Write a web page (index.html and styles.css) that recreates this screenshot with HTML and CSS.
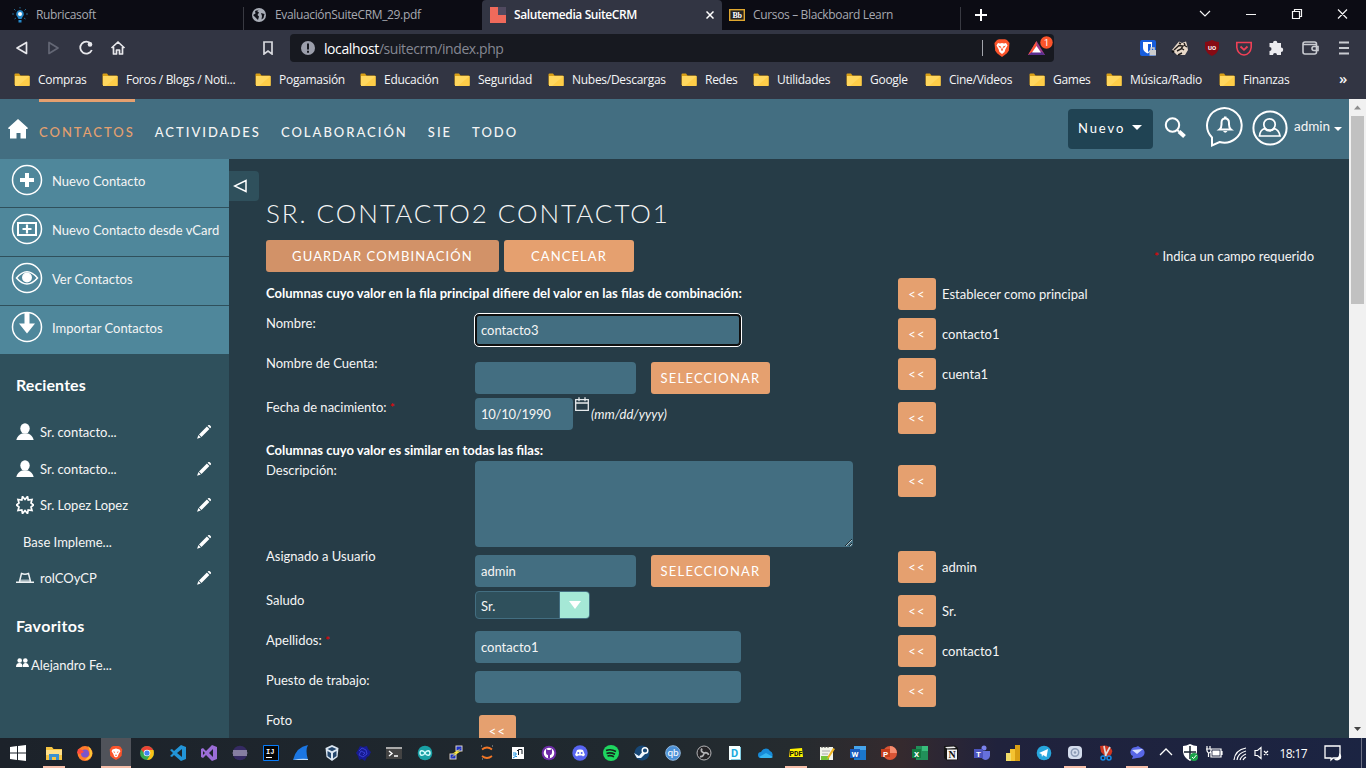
FILE: index.html
```html
<!DOCTYPE html>
<html lang="es">
<head>
<meta charset="utf-8">
<title>Salutemedia SuiteCRM</title>
<link rel="stylesheet" href="styles.css">
</head>
<body>
<svg class="defs" aria-hidden="true">
  <symbol id="folder" viewBox="0 0 16 14"><path d="M.5 1.5Q.5.5 1.5.5H5l1.500 2h8Q15.500 2.500 15.500 3.500V12H.5z" fill="#d9a016"/><rect x="1" y="3" width="14.500" height="10" fill="#ffd75e"/><path d="M15.500 3V13H4z" fill="#fdc93f" opacity=".7"/></symbol>
  <symbol id="pencil" viewBox="0 0 14 14"><path d="M10.600.8 13.100 3.300 14 2.400Q14.300 1.700 13.600 1L12.800.3Q12.200-.2 11.500 0zM9.900 1.500 12.400 4 4.500 11.900 2 9.400zM1.400 10 3.800 12.500.1 13.800z" fill="#fff"/></symbol>
  <symbol id="person" viewBox="0 0 18 18"><ellipse cx="9" cy="5.500" rx="4.700" ry="5.200" fill="#fff"/><path d="M.3 17Q1.500 12 6 10.500H12Q16.500 12 17.700 17z" fill="#fff"/></symbol>
</svg>

<header class="tabs">
  <div class="tab first"><svg class="i16" viewBox="0 0 16 16"><path d="M8 3a4 4 0 0 0-2.500 7L6.500 12h3l1-2A4 4 0 0 0 8 3M6.500 13h3v2.500h-3z" fill="#2588c9"/><circle cx="8" cy="7" r="2" fill="#fff"/><path d="M8 0v1.500M2 2l1.500 1.500M14 2l-1.500 1.500M0 7h2M14 7h2M2.500 12 4 11M13.500 12 12 11" stroke="#24678e"/></svg><span>Rubricasoft</span></div>
  <div class="tab second"><svg class="i16" viewBox="0 0 16 16"><circle cx="8" cy="8" r="7" fill="#aaaeb8"/><path d="M8.500 2.500 6 4l2 1.500L6.500 8 8 9.500 7 13 4.500 10.500 2 8 4.500 6.500 4 4zM10 6l3.500 1-1 4-2 1.500L11 9z" fill="#12131b"/></svg><span>EvaluaciónSuiteCRM_29.pdf</span></div>
  <div class="tab active"><svg class="i16" viewBox="0 0 16 16"><path d="M0 0h8v8h8v8H0z" fill="#f06a5b"/><path d="M8 0h8v8H8z" fill="#514a60"/></svg><span>Salutemedia SuiteCRM</span><svg class="x" viewBox="0 0 8 8"><path d="m.5.5 7 7m0-7-7 7" stroke="#fff" stroke-width="1.500"/></svg></div>
  <div class="tab fourth"><svg class="i16" viewBox="0 0 16 16"><rect x=".7" y="2.700" width="14.600" height="10.600" fill="#222" stroke="#dfa72f" stroke-width="1.400"/><text x="8" y="11" class="bb">Bb</text></svg><span>Cursos – Blackboard Learn</span></div>
  <svg class="plus" viewBox="0 0 12 12"><path d="M6 0v12M0 6h12" stroke="#fff" stroke-width="2"/></svg>
  <svg class="wincontrols" viewBox="0 0 168 16"><g fill="none" stroke="#f5f5f5" stroke-width="1.200"><path d="m1 5 5 5 5-5M47 8.500h10M93.500 5.500h7v7h-7zM95.500 5V3.500h7v7H101M139 3.500l9 9m0-9-9 9"/></g></svg>
</header>

<section class="toolbar">
  <svg class="navicons" viewBox="0 0 120 20"><g fill="none" stroke-width="1.700" stroke-linejoin="round"><path d="M12.500 4.500v11L3 10z" stroke="#e8e8ec"/><path d="M35 4.500v11L44 10z" stroke="#646775"/><path d="M77 6A6 6 0 1 0 77.800 12" stroke="#e8e8ec" stroke-width="1.800"/><circle cx="76" cy="6.400" r="2.300" fill="#e8e8ec"/><path d="m97.500 10 6.500-6 6.500 6M99.500 9v7h3v-4h3v4h3V9" stroke="#e8e8ec"/></g></svg>
  <svg class="mark" viewBox="0 0 10 14"><path d="M1 1h8v12L5 10l-4 3z" fill="none" stroke="#d8d9de" stroke-width="1.700"/></svg>
  <div class="address">
    <svg class="info" viewBox="0 0 14 14"><circle cx="7" cy="7" r="7" fill="#9b9eab"/><path d="M6 2.500h2v6H6zM6 9.700h2v2H6z" fill="#171920"/></svg>
    <span class="url"><b>localhost</b>/suitecrm/index.php</span>
    <i class="bar"></i>
    <svg class="brave" viewBox="0 0 16 18"><path d="m3 1 2-.8h6L13 1l2.500 3-.7 7.500Q14 14 8 18 2 14 1.200 11.500L.5 4z" fill="#fb542b"/><path d="m4 4 2 .5L8 4l2 .5 2-.5 1.500 2.500L11.500 10l-1 3L8 15l-2.500-2-1-3-2-3.500z" fill="#fff"/><path d="m4 6.500 3 1-.5 2zm8 0-3 1 .5 2zM8 8l1 3-1 1-1-1z" fill="#fb542b"/></svg>
    <svg class="bat" viewBox="0 0 27 21"><path d="M9.500 5 18 19H1z" fill="#9e3c8b"/><path d="M9.500 5 1 19l5-3 3.500-6z" fill="#ff5734"/><path d="M1 19h17l-3-3H5z" fill="#5a2f8f"/><path d="M9.500 10 14 16.500H5z" fill="#fff"/><circle cx="19.500" cy="6.500" r="6.200" fill="#fb542b"/><text x="19.500" y="9.800" class="badge">1</text></svg>
  </div>
  <svg class="exts" viewBox="0 0 218 20">
    <rect y="2" width="16" height="16" rx="2" fill="#175ddc"/><path d="M3 4h9v6q-1 4-4.500 5.500Q3 13 3 10z" fill="#fff"/><path d="M8 6h3v6L8 14z" fill="#175ddc"/><rect x="9.500" y="12" width="6.500" height="5.500" fill="#ccc"/><path d="M11 12v-2h3v2" fill="none" stroke="#ccc" stroke-width="1.500"/>
    <path d="m32 12 4-5 3-3.500 3 1.500 4-1.500 1 3.500 1 5-3 5h-8z" fill="#e8d8c8"/><path d="m34 12 5-4.500 4 .5-2 3-4 2m7-6 3 2m-5 6-4 2m3-7 3 2M39 5l2 1m3-1 1 2" fill="none" stroke="#221d1b" stroke-width="1.400"/><circle cx="33" cy="13.500" r="1.300" fill="#111"/>
    <path d="M72 2q4 2 7 2v6q-1 5-7 8-6-3-7-8V4q3 0 7-2" fill="#870a13"/><text x="72" y="11.500" class="ub">UO</text>
    <path d="M96.800 4.500h14.400v5q-1 7-7.200 7.500-6.200-.5-7.200-7.500z" fill="none" stroke="#ef4056" stroke-width="1.600"/><path d="m100.500 8.500 3.500 3.300 3.500-3.300" fill="none" stroke="#ef4056" stroke-width="1.800"/>
    <path d="M129.500 5h3.500a2.200 2.200 0 0 1 4.400 0h3.600v4.500a2.200 2.200 0 0 1 0 4.400V17h-4a2 2 0 0 0-4 0h-3.500v-4a2 2 0 0 0 0-4z" fill="#ececf0"/>
    <g fill="none" stroke="#c9cbd1" stroke-width="1.600"><rect x="163" y="4" width="13.500" height="12" rx="2"/><path d="M163 6.500h14M178 8.500h-4q-2 0-2 2t2 2h4z"/><path d="M199 4.500h10M199 10h10M199 15.500h10" stroke-width="1.900"/></g>
  </svg>
</section>

<nav class="bookmarks">
  <a><svg><use href="#folder"/></svg>Compras</a><a><svg><use href="#folder"/></svg>Foros / Blogs / Noti...</a><a><svg><use href="#folder"/></svg>Pogamasión</a><a><svg><use href="#folder"/></svg>Educación</a><a><svg><use href="#folder"/></svg>Seguridad</a><a><svg><use href="#folder"/></svg>Nubes/Descargas</a><a><svg><use href="#folder"/></svg>Redes</a><a><svg><use href="#folder"/></svg>Utilidades</a><a><svg><use href="#folder"/></svg>Google</a><a><svg><use href="#folder"/></svg>Cine/Videos</a><a><svg><use href="#folder"/></svg>Games</a><a><svg><use href="#folder"/></svg>Música/Radio</a><a><svg><use href="#folder"/></svg>Finanzas</a><b>»</b>
</nav>

<main class="viewport">
  <div class="site">
    <nav class="crmnav">
      <svg class="home" viewBox="0 0 20 20"><path d="M10 0 20 9l-.7 1H18v9.500h-5.500V14h-4v5.500H2V10H.7L0 9z" fill="#fff"/></svg>
      <a class="current">CONTACTOS</a><a>ACTIVIDADES</a><a>COLABORACIÓN</a><a>SIE</a><a>TODO</a>
      <div class="right">
        <button class="new">Nuevo <i class="caret"></i></button>
        <svg class="search" viewBox="0 0 22 22"><circle cx="8.500" cy="8" r="6.700" fill="none" stroke="#fff" stroke-width="2"/><path d="m13 13 2 1.500" stroke="#fff" stroke-width="2"/><path d="m15 14.500 5.500 5" stroke="#fff" stroke-width="4"/></svg>
        <svg class="bell" viewBox="0 0 38 42"><g fill="none" stroke="#fff" stroke-width="2"><path d="M6 33V39.500L13.500 36A17.300 17.300 0 1 0 6 31.500z"/><path d="M13.500 23.500H25Q23 22 23 18.500V17Q23 12.500 19.200 12.500T15.500 17V18.500Q15.500 22 13.500 23.500z"/></g><path d="M18 10.500h2.500V12H18zM17 25h4.500q-2.200 3.500-4.500 0" fill="#fff"/></svg>
        <svg class="user" viewBox="0 0 36 36"><g fill="none" stroke="#fff" stroke-width="1.700"><circle cx="18" cy="18" r="16.600" stroke-width="2"/><circle cx="17.500" cy="14.500" r="5.700"/><path d="M12.500 18.500Q8 20 7.500 26h20.500Q27 20 22.500 18.500Q17.500 23 12.500 18.500z"/></g></svg>
        <span class="admin">admin <i class="caret"></i></span>
      </div>
    </nav>
    <div class="body">
      <aside>
        <a class="action"><svg viewBox="0 0 32 32"><circle cx="16" cy="16" r="14.500"/><path d="M16 9v14M9 16h14" stroke-width="4"/></svg>Nuevo Contacto</a>
        <a class="action"><svg viewBox="0 0 32 32"><circle cx="16" cy="16" r="14.500"/><path d="M7 10h18v12H7z" stroke-width="2"/><path d="M16 11.500v9M11.500 16h9" stroke-width="2.200"/></svg>Nuevo Contacto desde vCard</a>
        <a class="action"><svg viewBox="0 0 32 32"><circle cx="16" cy="16" r="14.500"/><path d="M5.500 16Q16 3.500 26.500 16 16 28 5.500 16z"/><circle cx="16" cy="15.500" r="4.200" fill="#fff"/></svg>Ver Contactos</a>
        <a class="action"><svg viewBox="0 0 32 32"><circle cx="16" cy="16" r="14.500"/><path d="M13.500 1.500h5v11H24l-8 10-8-10h5.500z" fill="#fff" stroke="none"/></svg>Importar Contactos</a>
        <h3>Recientes</h3>
        <div class="recent"><svg><use href="#person"/></svg><span>Sr. contacto...</span><svg class="edit"><use href="#pencil"/></svg></div>
        <div class="recent"><svg><use href="#person"/></svg><span>Sr. contacto...</span><svg class="edit"><use href="#pencil"/></svg></div>
        <div class="recent"><svg viewBox="0 0 18 18"><path d="m9 3.500 2.500-3 .7 3.500 3.800-.5-1 3.500 2.500 2-2.500 2 1 3.500-3.800-.5-.7 3.500L9 14.500l-2.500 3L5.800 14l-3.800.5L3 11 .5 9 3 7 2 3.500l3.800.5.7-3.500z" fill="none" stroke="#fff" stroke-width="1.700"/></svg><span>Sr. Lopez Lopez</span><svg class="edit"><use href="#pencil"/></svg></div>
        <div class="recent noicon"><span>Base Impleme...</span><svg class="edit"><use href="#pencil"/></svg></div>
        <div class="recent"><svg viewBox="0 0 18 18"><path d="M4 10.500h10v2.500H3.500z" fill="#9fb0b7"/><path d="M3.500 12.500 5.500 4.500Q9 6 12.500 4.500l2 8M0 13.200h18" fill="none" stroke="#eef2f4" stroke-width="1.500"/></svg><span>rolCOyCP</span><svg class="edit"><use href="#pencil"/></svg></div>
        <h3 class="fav">Favoritos</h3>
        <div class="favorite"><svg viewBox="0 0 13 10"><g fill="#fff"><circle cx="3.700" cy="2.500" r="2.300"/><circle cx="9.300" cy="2.500" r="2.300"/><path d="M0 9Q0 5 3.500 5T6.200 9zM6.800 9Q6.500 5 9.500 5T13 9z"/></g></svg>Alejandro Fe...</div>
      </aside>
      <button class="collapse"><svg viewBox="0 0 14 14"><path d="M13 1.500v11L1.500 7z" fill="none" stroke="#fff" stroke-width="1.500"/></svg></button>
      <section class="form">
        <h1>SR. CONTACTO2 CONTACTO1</h1>
        <div class="buttons"><button class="btn save">GUARDAR COMBINACIÓN</button><button class="btn cancel">CANCELAR</button><span class="required"><em class="req">*</em> Indica un campo requerido</span></div>
        <div class="row head"><strong>Columnas cuyo valor en la fila principal difiere del valor en las filas de combinación:</strong><div class="merge"><button class="btn">&lt;&lt;</button>Establecer como principal</div></div>
        <div class="row h40 five"><label>Nombre:</label><div class="field one"><input class="long focused" value="contacto3"></div><div class="merge"><button class="btn">&lt;&lt;</button>contacto1</div></div>
        <div class="row h44 five"><label>Nombre de Cuenta:</label><div class="field nine"><input class="medium"><button class="btn select">SELECCIONAR</button></div><div class="merge"><button class="btn">&lt;&lt;</button>cuenta1</div></div>
        <div class="row h44 five"><label>Fecha de nacimiento: <em class="req">*</em></label><div class="field one"><input class="date" value="10/10/1990"><svg class="calendar" viewBox="0 0 14 14"><path d="M.7 2.700h12.600v10.600H.7zM.7 6h12.600M4 .3v4M10 .3v4" fill="none" stroke="#e6eaec" stroke-width="1.300"/></svg><i class="format">(mm/dd/yyyy)</i></div><div class="merge"><button class="btn">&lt;&lt;</button></div></div>
        <div class="row up similar"><strong>Columnas cuyo valor es similar en todas las filas:</strong></div>
        <div class="row up h86"><label>Descripción:</label><div class="field"><textarea></textarea></div><div class="merge"><button class="btn">&lt;&lt;</button></div></div>
        <div class="row up h44"><label>Asignado a Usuario</label><div class="field eight"><input class="medium" value="admin"><button class="btn select">SELECCIONAR</button></div><div class="merge"><button class="btn">&lt;&lt;</button>admin</div></div>
        <div class="row up h40"><label>Saludo</label><div class="field"><div class="dropdown"><span>Sr.</span><i><svg viewBox="0 0 12 8"><path d="M0 0h12L6 8z" fill="#fff"/></svg></i></div></div><div class="merge"><button class="btn">&lt;&lt;</button>Sr.</div></div>
        <div class="row up h40"><label>Apellidos: <em class="req">*</em></label><div class="field"><input class="long" value="contacto1"></div><div class="merge"><button class="btn">&lt;&lt;</button>contacto1</div></div>
        <div class="row up h40"><label>Puesto de trabajo:</label><div class="field"><input class="long"></div><div class="merge"><button class="btn">&lt;&lt;</button></div></div>
        <div class="row up h40"><label>Foto</label><div class="field photo"><button class="btn">&lt;&lt;</button></div></div>
      </section>
    </div>
  </div>
  <div class="scrollbar"><svg viewBox="0 0 17 17"><path d="m5 10.500 3.500-4 3.500 4z" fill="#8e8e8e"/></svg><i></i><svg viewBox="0 0 17 17"><path d="m5 6 3.500 4L12 6z" fill="#444"/></svg></div>
</main>

<footer class="taskbar">
  <svg class="start" viewBox="0 0 16 16"><path d="m0 2 7-1v6.500H0zM8 .9 16 0v7.500H8zM0 8.500h7V15l-7-1zM8 8.500h8V16l-8-.9z" fill="#fff"/></svg>
  <div class="apps">
    <i class="open"><svg viewBox="0 0 16 16"><path d="M0 2h6l1.500 2H16v11H0z" fill="#f6c544"/><path d="M0 5h16v5H0z" fill="#ffe08a"/><path d="M3 9h10v6h-3v-3H6v3H3z" fill="#3c91d0"/></svg></i>
    <i><svg viewBox="0 0 16 16"><circle cx="8" cy="8.500" r="7.500" fill="#ff7b2c"/><path d="M11 1q5 4 4 9-2 5-7 5l5-5q0-5-2-9" fill="#ffc636"/><circle cx="8" cy="8.500" r="4" fill="#7954cb"/><path d="M1 4q4 0 6 3L3 9 0 8" fill="#ff493f"/></svg></i>
    <i class="open now"><svg viewBox="0 0 16 18"><path d="m3 2 2-1h6l2 1 2 3-.7 7Q13 14 8 17 3 14 1.500 12L1 5z" fill="#fb542b"/><path d="m4 5 4-1 4 1 1 2-2 3-1 3-2 1-2-1-1-3-2-3z" fill="#fff"/><path d="m5 7 2 1-1 1zm6 0-2 1 1 1zM7 11h2v1H7z" fill="#fb542b"/></svg></i>
    <i><svg viewBox="0 0 16 16"><circle cx="8" cy="8" r="7" fill="#35a853"/><path d="M2 4.500Q4 1 8 1t6.300 4H8L5 8z" fill="#ea4335"/><path d="M8 5h6.500Q16 10 12 14q-2 1-4 1l3-5z" fill="#fbc116"/><circle cx="8" cy="8" r="3.300" fill="#fff"/><circle cx="8" cy="8" r="2.600" fill="#4285f4"/></svg></i>
    <i><svg viewBox="0 0 16 16"><path d="m11 0 5 2v12l-5 2-7-6-2 2-2-1 3-3-3-3 2-1 2 2zm1 4L7 8l5 4z" fill="#2295d8"/></svg></i>
    <i><svg viewBox="0 0 16 16"><path d="m11 0 5 2v12l-5 2-6-6-3 3-2-1V4l2-1 3 3zm1 4L8 8l4 4zM2 6v4l2-2z" fill="#9b6dd7"/></svg></i>
    <i><svg viewBox="0 0 16 16"><circle cx="8" cy="8" r="7.300" fill="#352a62"/><path d="M1 6h14M.7 8h14.600M1 10h14" stroke="#e9e4ee" stroke-width=".9"/></svg></i>
    <i><svg viewBox="0 0 16 16"><path d="M.5.5h15v15H.5z" fill="#050505" stroke="#087cfa"/><text x="3" y="8.500" class="ij">IJ</text><path d="M3 12.500h6" stroke="#fff"/></svg></i>
    <i><svg viewBox="0 0 16 16"><path d="M0 15Q3 2 15 0q-3 5 0 15z" fill="#1b76e2"/><path d="M0 15q8-2 15-1v1z" fill="#bcd8f5"/></svg></i>
    <i><svg viewBox="0 0 16 16"><path d="m8 0 6.500 3-1 9L8 16l-5.500-4-1-9z" fill="#dce7f2"/><path d="M8 2 3.500 4 8 6.200 12.500 4zM3.500 6v5L7 13.500V8zM12.500 6v5L9 13.500V8z" fill="#24466c"/></svg></i>
    <i><svg viewBox="0 0 16 16"><path d="m5 1 3 1 4-1 1 3 3 3-2 4-2 1-2 4-3-2-3 1-1-4-2-3 2-3z" fill="#171b92"/><path d="m4 6 3-3 4 2 1 4-4 3-4-2 2-4 4 2-2 2" fill="none" stroke="#3740d1"/></svg></i>
    <i><svg viewBox="0 0 16 16"><path d="M0 2h16v12H0z" fill="#434343"/><path d="M0 2h16v2H0z" fill="#aaa"/><path d="m3 6 3 2.500L3 11m5 0h4" fill="none" stroke="#fff" stroke-width="1.400"/></svg></i>
    <i><svg viewBox="0 0 16 16"><circle cx="8" cy="8" r="7.300" fill="#19a0a5"/><path d="M8 8C6.500 5 3 5 3 8s3.500 3 5 0 5-3 5 0-3.500 3-5 0" fill="none" stroke="#d8ffff" stroke-width="1.400"/></svg></i>
    <i><svg viewBox="0 0 16 16"><path d="M7 0h8v7H7zM1 8h8v7H1z" fill="#d6d6d6" stroke="#222"/><path d="M8.500 1.500h5v4h-5zM2.500 9.500h5v4h-5z" fill="#1c30c8"/><path d="m13 3-9 6 4-1-5 5 10-7-4 1z" fill="#ffeb3b"/></svg></i>
    <i><svg viewBox="0 0 16 16"><path d="M3 4.500q5-4 10 0M3 11q5 4 10 0" fill="none" stroke="#f37726" stroke-width="1.700"/><path d="M2 1h1M13 1h1M3 14h1" stroke="#aaa"/></svg></i>
    <i><svg viewBox="0 0 16 16"><path d="M2 2h12v12H2z" fill="#fff"/><path d="M8.500 10V4.500H12V9M9 5.500H7" fill="none" stroke="#151c25"/><path d="M3 8h3v2H3m0 3 3-2 1 1" fill="none" stroke="#1991e1"/></svg></i>
    <i><svg viewBox="0 0 16 16"><circle cx="8" cy="8" r="7.300" fill="#6f2da8"/><circle cx="8" cy="8" r="5.300" fill="#fff"/><path d="M5 4 7 5h2l2-1v3q0 3-2 3v3H7v-3q-2 0-2-3z" fill="#6f2da8"/></svg></i>
    <i><svg viewBox="0 0 16 16"><circle cx="8" cy="8" r="7.700" fill="#5865f2"/><path d="m5 5 2-.5h2l2 .5 2 5-2 1.500-1-1H6l-1 1L3 10z" fill="#fff"/><circle cx="6.300" cy="8" r="1" fill="#5865f2"/><circle cx="9.700" cy="8" r="1" fill="#5865f2"/></svg></i>
    <i><svg viewBox="0 0 16 16"><circle cx="8" cy="8" r="8" fill="#1ed760"/><path d="M3 5.500q5-2 10 1M3.500 8.500q4-1.500 8.500.8M4.500 11q3-1 6.500.7" fill="none" stroke="#16251c" stroke-width="1.600"/></svg></i>
    <i><svg viewBox="0 0 16 16"><circle cx="8" cy="8" r="7.500" fill="#174776"/><path d="m0 8 5 3 4-5 3 2-5 5-4 0z" fill="#eef7ff"/><circle cx="11" cy="5.500" r="2.800" fill="#174776" stroke="#fff" stroke-width="1.400"/></svg></i>
    <i><svg viewBox="0 0 16 16"><circle cx="8" cy="8" r="7.300" fill="#4c91d7" stroke="#90b8de"/><text x="8" y="11" class="qb">qb</text></svg></i>
    <i><svg viewBox="0 0 16 16"><circle cx="8" cy="8" r="7" fill="#242326" stroke="#b3b3b6"/><path d="M6 3.500Q4 6.500 8 8q4-1 4.500 2M8 8q-.5 4-4 3.500" fill="none" stroke="#b3b3b6" stroke-width="1.800"/></svg></i>
    <i><svg viewBox="0 0 16 16"><path d="M2 1h11v14H2z" fill="#f6ffff"/><path d="M13 2h1v13H4v-1h9z" fill="#82cce1"/><text x="4" y="12" class="dt">D</text></svg></i>
    <i><svg viewBox="0 0 16 16"><path d="M3 13a3 3 0 0 1 0-6 5 5 0 0 1 9-1 4 4 0 0 1 1 7z" fill="#178bd8"/><path d="m1 12 7-4 7 4q-1 1-3 1H3z" fill="#35b6f1"/></svg></i>
    <i class="open"><svg viewBox="0 0 16 16"><path d="m2 4 12-1 1 9H1z" fill="#fff200"/><text x="8" y="11" class="pdf">PDF</text></svg></i>
    <i><svg viewBox="0 0 16 16"><path d="M1 2h13v13H1z" fill="#f2f3e9"/><path d="M3 1v2m3-2v2m3-2v2" stroke="#444"/><path d="M3 6h8M3 9h6" stroke="#aaa"/><path d="M2 11h8v4H2z" fill="#75c43b"/><path d="m14 3 2 1-6 9-2 1 1-3z" fill="#efb321"/></svg></i>
    <i><svg viewBox="0 0 16 16"><path d="M4 1h12v14H4z" fill="#1b77cd"/><path d="M4 1h12v4H4z" fill="#46a4ec"/><path d="M0 4h10v9H0z" fill="#185abd"/><text x="5" y="11.500" class="office">W</text></svg></i>
    <i><svg viewBox="0 0 16 16"><circle cx="9" cy="8" r="7" fill="#d95435"/><path d="M9 1a7 7 0 0 1 7 7H9z" fill="#f58d70"/><path d="M0 4h9v8H0z" fill="#c43e1c"/><text x="4.500" y="11.500" class="office">P</text></svg></i>
    <i><svg viewBox="0 0 16 16"><path d="M4 1h12v14H4z" fill="#218f59"/><path d="M10 1h6v5h-6z" fill="#38bd7c"/><path d="M0 4h9v9H0z" fill="#107c41"/><text x="4.500" y="11.500" class="office">X</text></svg></i>
    <i><svg viewBox="0 0 16 16"><path d="m1 1 11-.5L15 3v12l-11 .5L1 13z" fill="#151515"/><path d="m2 2 9-.5L13 3 4 3.500zM4 4.500h10V14.500H4z" fill="#f2f2f2"/><text x="9" y="13" class="notion">N</text></svg></i>
    <i><svg viewBox="0 0 16 16"><circle cx="10" cy="3" r="2.500" fill="#7b83eb"/><path d="M7 6h9v5q-1 4-5 4-4-1-4-5z" fill="#6670dc"/><path d="M0 4h9v9H0z" fill="#4b53bc"/><text x="4.500" y="11.500" class="office">T</text></svg></i>
    <i><svg viewBox="0 0 16 16"><path d="M10 0h5v16h-5z" fill="#d89e13"/><path d="M5 4h5v12H5z" fill="#f4c331"/><path d="M1 8h5v8H1z" fill="#f1dc69"/></svg></i>
    <i><svg viewBox="0 0 16 16"><circle cx="8" cy="8" r="7.300" fill="#27a6dd"/><path d="m3 8 9-4-1.500 8L7 10l-1 2-.5-3z" fill="#fff"/></svg></i>
    <i class="open"><svg viewBox="0 0 16 16"><rect x="1" y="1" width="14" height="13" rx="4" fill="#d4dcec"/><circle cx="8" cy="7.500" r="3.700" fill="none" stroke="#8c9bb5" stroke-width="1.500"/><circle cx="8" cy="7.500" r="1.300" fill="#8c9bb5"/></svg></i>
    <i><svg viewBox="0 0 16 16"><path d="M2 1q9-2 12 4 1 4-3 7H8L3 7z" fill="#cf3721"/><path d="m6 1 2 10M12 2 7 11" stroke="#ddd" stroke-width="1.700"/><circle cx="5" cy="13" r="2" fill="none" stroke="#168ae5" stroke-width="1.500"/><circle cx="11" cy="13" r="2" fill="none" stroke="#168ae5" stroke-width="1.500"/></svg></i>
    <i class="open"><svg viewBox="0 0 16 16"><path d="M2 5q1-3 5-3l2-1 3 2q5 2 3 7-2 3-7 3l-5 1 1-3Q0 9 2 5" fill="#5867e7"/><path d="m3 5 11-1-6 5z" fill="#d6dfff"/></svg></i>
  </div>
  <svg class="tray" viewBox="0 0 118 20"><g fill="none" stroke="#fff" stroke-width="1.300"><path d="m5 12 6-6 6 6"/></g><path d="M35 1q4 2 7 2v6q-1 6-7 9-6-3-7-9V3q3 0 7-2" fill="#fff"/><path d="M35 3v13M29 9h12" stroke="#172331" stroke-width="1.500"/><circle cx="39" cy="14" r="4" fill="#1aa34a"/><path d="m37 14 1.500 1.500L41.500 12" stroke="#fff" fill="none"/><g fill="none" stroke="#fff" stroke-width="1.200"><path d="M56 6h10v8H56V9M67 8v4M52 3v3m3-3v3m-4 0h5v2q-1 2-2 2t-2-2V6m1.500 4v4"/><path fill="#fff" d="M58 8h6v4h-6z"/><path d="M79 17Q80 7 91 5M82 17q1-7 9-9M85 17q1-4 6-6M88 17q1-2 3-3"/><path d="M100 7.500h2.500l3.500-3v11l-3.500-3H100zM109 8l4 4m0-4-4 4"/></g></svg>
  <span class="clock">18:17</span>
  <svg class="notice" viewBox="0 0 18 18"><path d="M1 2h15v12H9l-2 2v-2H1z" fill="none" stroke="#fff" stroke-width="1.300"/><path d="M15 9a4 4 0 1 1-5 6 5 5 0 0 0 5-6" fill="#fff"/></svg>
  <i class="peek"></i>
</footer>
</body>
</html>
```
FILE: styles.css
```css
* { box-sizing: border-box; }
body { margin: 0; width: 1366px; height: 768px; overflow: hidden; display: flex; flex-direction: column; font-family: "Open Sans", "Noto Sans", sans-serif; }
button, input, textarea { font: inherit; color: inherit; border: 0; padding: 0; margin: 0; }
svg { display: block; flex: none; }
.defs { position: absolute; width: 0; height: 0; }

/* Browser frame */
.tabs { height: 30px; flex: none; background: #0c0c14; display: flex; align-items: center; color: #a7a9b1; font-size: 12px; letter-spacing: -.35px; white-space: nowrap; }
.tab { height: 30px; display: flex; align-items: center; gap: 8px; }
.tab span { margin-top: -1px; }
.i16 { width: 16px; height: 16px; }
.tab.first { width: 244px; padding-left: 12px; background: linear-gradient(#393a42, #393a42) right bottom / 1px 23px no-repeat; }
.tab.second { width: 238px; padding-left: 7px; }
.tab.active { width: 240px; padding: 0 8px; background: #323543; border-radius: 4px 4px 0 0; color: #fff; font-weight: 600; letter-spacing: -.4px; }
.x { width: 8px; height: 8px; margin-left: auto; }
.tab.fourth { width: 239px; padding-left: 7px; background: linear-gradient(#393a42, #393a42) right bottom / 1px 23px no-repeat; }
.plus { width: 12px; height: 12px; margin-left: 14px; }
.wincontrols { width: 168px; height: 16px; margin: -2px 0 0 auto; transform: translateX(1px); }
.bb { font: bold 8px "Liberation Serif", serif; fill: #fff; text-anchor: middle; }
.toolbar { height: 36px; flex: none; background: #323543; display: flex; align-items: center; }
.navicons { width: 120px; height: 20px; margin-left: 14px; }
.mark { width: 10px; height: 14px; margin-left: 129px; }
.address { width: 764px; height: 28px; margin-left: 17px; padding-left: 11px; border-radius: 4px; background: #171920; display: flex; align-items: center; }
.info { width: 14px; height: 14px; }
.url { margin-left: 9px; color: #858893; font-size: 14px; letter-spacing: -.42px; width: 658px; }
.url b { font-weight: 400; color: #fff; }
.bar { width: 1px; height: 16px; background: #a3a5ac; }
.brave { width: 16px; height: 18px; margin-left: 11px; }
.bat { width: 27px; height: 21px; margin: -4px 0 0 17px; }
.badge { font: 9px Roboto, sans-serif; text-anchor: middle; fill: #fff; }
.exts { width: 218px; height: 20px; margin-left: 86px; }
.ub { font: bold 6px Roboto, sans-serif; text-anchor: middle; fill: #fff; }
.bookmarks { height: 33px; flex: none; background: #323543; color: #f5f5f7; padding: 0 0 6px 14px; display: grid; grid-template-columns: 88px 153px 105px 94px 94px 133px 72px 93px 79px 104px 77px 113px 118px 20px; align-items: center; font-size: 12px; letter-spacing: -.28px; white-space: nowrap; }
.bookmarks a { display: flex; align-items: center; gap: 8px; }
.bookmarks svg { width: 16px; height: 14px; margin-top: 1px; }
.bookmarks b { font-size: 15px; font-weight: 600; line-height: 20px; margin: -3px 0 0 2px; }

/* CRM navigation */
.viewport { flex: 1; min-height: 0; display: flex; overflow: hidden; font-family: Lato, sans-serif; color: #f5f5f5; font-size: 13px; }
.site { width: 1349px; display: flex; flex-direction: column; overflow: hidden; }
.crmnav { height: 60px; flex: none; background: #436e81; display: flex; align-items: stretch; font-weight: 500; letter-spacing: 2px; }
.home { width: 20px; height: 20px; margin: 20px 11px 0 8px; }
.crmnav > a { height: 60px; padding-top: 21px; margin-right: 20px; line-height: 18px; border-top: 3px solid transparent; }
.crmnav .current { color: #e5a06f; border-color: #e5a06f; }
.right { margin-left: auto; display: flex; letter-spacing: 0; font-weight: 400; }
.new { width: 85px; height: 40px; margin-top: 10px; border-radius: 4px; background: #204353; display: flex; align-items: center; gap: 7px; padding: 0 0 3px 10px; letter-spacing: 1.9px; color: #fff; }
.caret { display: inline-block; width: 0; height: 0; border: 5px solid transparent; border-bottom: 0; border-top-color: #fff; }
.search { width: 22px; height: 22px; margin: 18px 20px 0 11px; }
.bell { width: 38px; height: 42px; margin: 7px 8px 0 0; }
.user { width: 36px; height: 36px; margin: 11px 6px 0 0; }
.admin { width: 55px; padding-top: 18px; line-height: 18px; font-size: 13.5px; white-space: nowrap; display: flex; gap: 4px; }
.admin .caret { border-left-width: 4px; border-right-width: 4px; border-top-width: 4px; margin-top: 10px; }

/* Sidebar */
.body { flex: 1; min-height: 0; background: #263c47; display: flex; align-items: flex-start; }
aside { width: 229px; height: 700px; flex: none; background: #2f505c; }
.action { height: 49px; display: flex; padding: 5px 0 0 11px; gap: 9px; line-height: 34px; background: #4f879b; border-bottom: 1px solid #2f505c; white-space: nowrap; }
.action svg { width: 32px; height: 32px; fill: none; stroke: #fff; stroke-width: 1.5; }
aside h3 { margin: 19px 0 18px 16px; font-size: 16px; line-height: 22px; letter-spacing: .1px; color: #fff; }
.recent { height: 36.5px; display: flex; align-items: center; padding-left: 16px; padding-right: 18px; }
.recent > svg:first-child { width: 18px; height: 18px; margin-right: 6px; }
.recent.noicon { padding-left: 23px; }
.recent .edit { width: 14px; height: 14px; margin-left: auto; }
aside h3.fav { margin: 18px 0 17px 16px; letter-spacing: .35px; }
.favorite { display: flex; padding-left: 16px; line-height: 22px; gap: 2px; }
.favorite svg { width: 13px; height: 10px; margin-top: 4px; }
.collapse { width: 30px; height: 30px; margin-top: 12px; flex: none; background: #2f505c; border-radius: 0 4px 4px 0; display: flex; align-items: center; padding-left: 4px; }
.collapse svg { width: 14px; height: 14px; }

/* Merge form */
.form { margin-left: 7px; width: 1083px; padding-top: 38px; }
h1 { margin: 0 0 11px; font-size: 26px; line-height: 32px; font-weight: 300; letter-spacing: 1.95px; white-space: nowrap; }
.buttons { display: flex; height: 32px; gap: 5px; margin-bottom: 6px; }
.btn { display: block; flex: none; height: 32px; background: #e5a06f; border-radius: 3px; text-align: center; font-size: 13px; letter-spacing: 1.1px; color: #fff; }
.save { width: 233px; background: #d29268; }
.cancel { width: 130px; }
.required { margin: 7px 35px 0 auto; line-height: 18px; }
.req { color: #f00000; font-size: 12px; font-style: normal; }
.row { display: grid; grid-template-columns: 209px 423px 1fr; line-height: 20px; align-items: start; white-space: nowrap; }
.up label, .up strong { margin-top: -1px; }
.head { height: 35px; grid-template-columns: 632px 1fr; }
.head strong { padding-top: 5px; }
.row.head .merge { padding-top: 0; }
strong { color: #fff; }
.h40 { height: 40px; } .h44 { height: 44px; } .h86 { height: 86px; }
.similar { height: 20px; }
.merge { padding-top: 4px; display: flex; align-items: center; gap: 6px; }
.five .merge { padding-top: 5px; }
.merge .btn { width: 38px; }
.photo .btn { width: 37px; }
.field { display: flex; align-items: flex-start; }
.field.one { padding-top: 1px; }
.field.nine { padding-top: 9px; }
.field.eight { padding-top: 8px; }
.field.photo { padding: 4px 0 0 4px; }
.field input, textarea { display: block; height: 32px; background: #436e81; border-radius: 4px; padding: 0 6px; outline: 0; }
.long { width: 266px; } .medium { width: 161px; } .field .date { width: 98px; letter-spacing: -.25px; }
.field .focused { border: 2px solid #101010; padding: 0 4px 1px; outline: 1px solid #fff; }
.select { width: 119px; margin-left: 15px; letter-spacing: 1.2px; }
.calendar { width: 14px; height: 14px; margin: -1px 2px 0; }
.format { padding-top: 6px; }
.field textarea { width: 378px; height: 86px; }
.dropdown { width: 115px; height: 28px; border: 1px solid #436e81; border-radius: 4px; background: #2f505c; display: flex; overflow: hidden; }
.dropdown span { width: 84px; padding-left: 5px; line-height: 28px; border-right: 1px solid #436e81; }
.dropdown i { flex: 1; background: #a5e8d6; display: flex; align-items: center; justify-content: center; }
.dropdown svg { width: 12px; height: 8px; }
.scrollbar { width: 17px; background: #f1f1f1; display: flex; flex-direction: column; }
.scrollbar svg { width: 17px; height: 17px; }
.scrollbar i { height: 188px; margin: 0 2px auto; background: #c1c1c1; }

/* Desktop taskbar */
.taskbar { height: 30px; flex: none; display: flex; align-items: center; background: linear-gradient(90deg, #1c222a 0, #20292f 45%, #252b2f 58%, #352a2e 66%, #20223c 73%, #1b2442 100%); }
.start { width: 16px; height: 16px; margin-left: 10px; }
.apps { display: flex; margin-left: 12.5px; width: 1111px; flex: none; }
.apps i { width: 30.95px; height: 30px; flex: none; display: flex; align-items: center; justify-content: center; }
.apps i svg { width: 16px; height: 16px; }
.apps .open { background: linear-gradient(#f6bea9, #f6bea9) center bottom / 22px 2px no-repeat; }
.apps .now { background: linear-gradient(#f6bea9, #f6bea9) center bottom / 30px 2px no-repeat, linear-gradient(#50535a, #50535a) center / 30px 30px no-repeat; }
.tray { width: 118px; height: 20px; margin-left: 5px; }
.clock { width: 28px; margin-left: 7px; color: #fff; font-size: 12px; letter-spacing: -.6px; }
.notice { width: 18px; height: 18px; margin-left: 16px; }
.peek { width: 1px; height: 30px; margin-left: 19px; background: #6d7185; }
.ij { font: bold 7px "Liberation Mono", monospace; fill: #fff; }
.qb { font: 10px Lato, sans-serif; fill: #fff; text-anchor: middle; }
.dt { font: bold 11px Roboto, sans-serif; fill: #16a9dd; }
.pdf { font: bold 7px Roboto, sans-serif; fill: #111; text-anchor: middle; }
.office { font: bold 8px Roboto, sans-serif; fill: #fff; text-anchor: middle; }
.notion { font: bold 10px "Liberation Serif", serif; fill: #111; text-anchor: middle; }
```
